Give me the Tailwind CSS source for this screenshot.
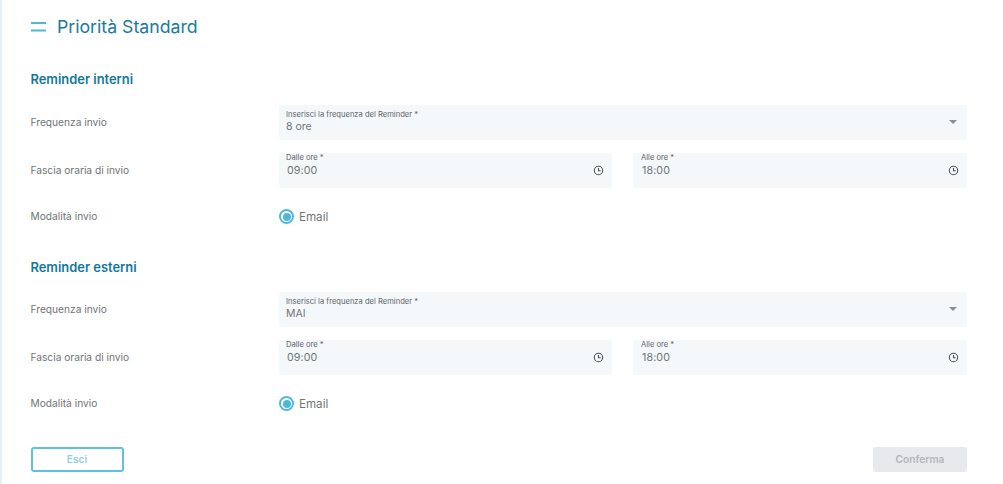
<!DOCTYPE html>
<html><head><meta charset="utf-8">
<script src="https://cdn.jsdelivr.net/npm/@tailwindcss/browser@4"></script>
</head>
<body class="bg-white">
<div class="w-[1003px] h-[484px] overflow-hidden border-l-2 border-[#e4f1f8] font-['Inter',sans-serif] pl-[28.5px] pr-[35px] flex flex-col">
  <div class="flex items-center h-[54px] shrink-0">
    <svg width="15" height="10" viewBox="0 0 15 10" class="mr-[11.5px]"><rect x="0" y="0" width="15" height="2" fill="#4db8dc"/><rect x="0" y="7.5" width="15" height="2" fill="#4db8dc"/></svg>
    <h1 class="text-[17.7px] leading-[24px] text-[#1a7a9c]">Priorità Standard</h1>
  </div>

  <h2 class="mt-[17px] text-[12.9px] leading-[18px] font-semibold text-[#14789b]">Reminder interni</h2>
  <div class="mt-[16px] flex items-center h-[35px]">
    <span class="w-[248.5px] text-[10.2px] text-[#6f7478]">Frequenza invio</span>
    <div class="relative w-[688px] h-[35px] bg-[#f4f8fb] rounded-[2px] pl-[7px]">
      <div class="text-[7.6px] leading-[11px] pt-[4px] text-[#5f6468]">Inserisci la frequenza del Reminder *</div>
      <div class="text-[10.5px] leading-[14px] text-[#6f7478]">8 ore</div>
      <div class="absolute right-[10px] top-[15px] w-0 h-0 border-x-[4px] border-x-transparent border-t-[4px] border-t-[#8a8f93]"></div>
    </div>
  </div>
  <div class="mt-[13px] flex items-center h-[35px]">
    <span class="w-[248.5px] text-[10.2px] text-[#6f7478]">Fascia oraria di invio</span>
    <div class="flex gap-[21px]">
      <div class="relative w-[333px] h-[35px] bg-[#f4f8fb] rounded-[2px] pl-[7px]">
        <div class="text-[7.6px] leading-[10px] text-[#5f6468]">Dalle ore *</div>
        <div class="text-[10.7px] leading-[16px] tracking-[0.1px] pl-[1px] text-[#6f7478]">09:00</div>
        <svg class="absolute right-[8.5px] top-[11.5px]" width="11" height="11" viewBox="0 0 11 11" fill="none" stroke="#4f5356" stroke-width="1.1"><circle cx="5.5" cy="5.5" r="4.2"/><path d="M5.5 3V5.8H7.7"/></svg>
      </div>
      <div class="relative w-[334px] h-[35px] bg-[#f4f8fb] rounded-[2px] pl-[8px]">
        <div class="text-[7.6px] leading-[10px] text-[#5f6468]">Alle ore *</div>
        <div class="text-[10.7px] leading-[16px] tracking-[0.1px] pl-[1px] text-[#6f7478]">18:00</div>
        <svg class="absolute right-[8.5px] top-[11.5px]" width="11" height="11" viewBox="0 0 11 11" fill="none" stroke="#4f5356" stroke-width="1.1"><circle cx="5.5" cy="5.5" r="4.2"/><path d="M5.5 3V5.8H7.7"/></svg>
      </div>
    </div>
  </div>
  <div class="mt-[11px] flex items-center h-[35px]">
    <span class="w-[248.5px] text-[10.2px] text-[#6f7478]">Modalità invio</span>
    <span class="flex items-center justify-center w-[15px] h-[15px] rounded-full border-[2px] border-[#4db8dc]"><span class="w-[8px] h-[8px] rounded-full bg-[#4db8dc]"></span></span>
    <span class="ml-[5px] pt-[1px] text-[11.6px] leading-[15px] text-[#6f7478]">Email</span>
  </div>

  <h2 class="mt-[25px] text-[12.9px] leading-[18px] font-semibold text-[#14789b]">Reminder esterni</h2>
  <div class="mt-[15px] flex items-center h-[35px]">
    <span class="w-[248.5px] text-[10.2px] text-[#6f7478]">Frequenza invio</span>
    <div class="relative w-[688px] h-[35px] bg-[#f4f8fb] rounded-[2px] pl-[7px]">
      <div class="text-[7.6px] leading-[11px] pt-[4px] text-[#5f6468]">Inserisci la frequenza del Reminder *</div>
      <div class="text-[10.5px] leading-[14px] text-[#6f7478]">MAI</div>
      <div class="absolute right-[10px] top-[15px] w-0 h-0 border-x-[4px] border-x-transparent border-t-[4px] border-t-[#8a8f93]"></div>
    </div>
  </div>
  <div class="mt-[13px] flex items-center h-[35px]">
    <span class="w-[248.5px] text-[10.2px] text-[#6f7478]">Fascia oraria di invio</span>
    <div class="flex gap-[21px]">
      <div class="relative w-[333px] h-[35px] bg-[#f4f8fb] rounded-[2px] pl-[7px]">
        <div class="text-[7.6px] leading-[10px] text-[#5f6468]">Dalle ore *</div>
        <div class="text-[10.7px] leading-[16px] tracking-[0.1px] pl-[1px] text-[#6f7478]">09:00</div>
        <svg class="absolute right-[8.5px] top-[11.5px]" width="11" height="11" viewBox="0 0 11 11" fill="none" stroke="#4f5356" stroke-width="1.1"><circle cx="5.5" cy="5.5" r="4.2"/><path d="M5.5 3V5.8H7.7"/></svg>
      </div>
      <div class="relative w-[334px] h-[35px] bg-[#f4f8fb] rounded-[2px] pl-[8px]">
        <div class="text-[7.6px] leading-[10px] text-[#5f6468]">Alle ore *</div>
        <div class="text-[10.7px] leading-[16px] tracking-[0.1px] pl-[1px] text-[#6f7478]">18:00</div>
        <svg class="absolute right-[8.5px] top-[11.5px]" width="11" height="11" viewBox="0 0 11 11" fill="none" stroke="#4f5356" stroke-width="1.1"><circle cx="5.5" cy="5.5" r="4.2"/><path d="M5.5 3V5.8H7.7"/></svg>
      </div>
    </div>
  </div>
  <div class="mt-[11px] flex items-center h-[35px]">
    <span class="w-[248.5px] text-[10.2px] text-[#6f7478]">Modalità invio</span>
    <span class="flex items-center justify-center w-[15px] h-[15px] rounded-full border-[2px] border-[#4db8dc]"><span class="w-[8px] h-[8px] rounded-full bg-[#4db8dc]"></span></span>
    <span class="ml-[5px] pt-[1px] text-[11.6px] leading-[15px] text-[#6f7478]">Email</span>
  </div>

  <div class="mt-[26px] flex justify-between w-[936.5px]">
    <button class="w-[93px] h-[25px] rounded-[3px] border-[2px] border-[#5fc0e0] text-[10.2px] font-semibold text-[#8fcfe6]">Esci</button>
    <button class="w-[94px] h-[25px] rounded-[3px] bg-[#e8e9ec] text-[10.2px] font-semibold text-[#b4b6ba]">Conferma</button>
  </div>
</div>
</body></html>
